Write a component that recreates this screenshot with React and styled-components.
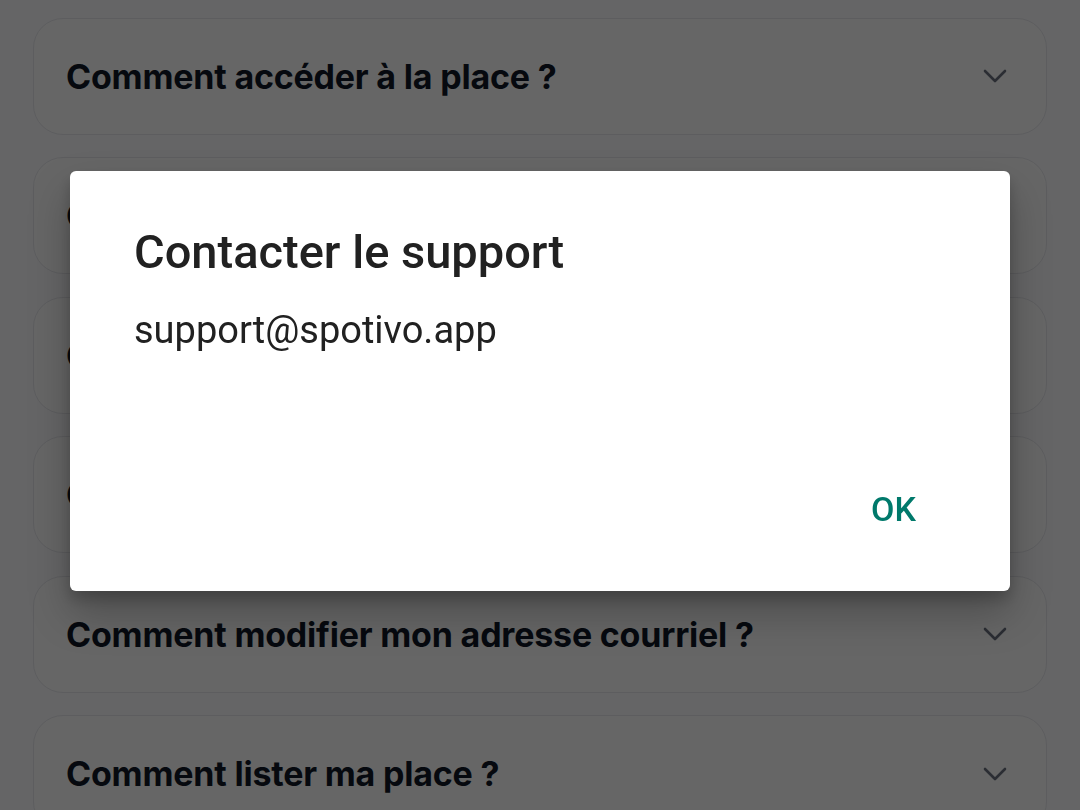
import React from 'react';
import styled, { createGlobalStyle } from 'styled-components';

const GlobalStyle = createGlobalStyle`
  html, body {
    margin: 0;
    padding: 0;
    background: #fdfdff;
  }
  body {
    font-family: Inter, "Noto Sans", sans-serif;
    overflow: hidden;
  }
`;

const questions = [
  'Comment accéder à la place ?',
  'Comment réserver une place ?',
  'Comment annuler ma réservation ?',
  'Comment payer ma réservation ?',
  'Comment modifier mon adresse courriel ?',
  'Comment lister ma place ?',
];

function Chevron() {
  return (
    <svg width="26" height="16" viewBox="0 0 26 16" fill="none">
      <path d="M3 3l10 10 10-10" stroke="#6b7280" strokeWidth="2.6" strokeLinecap="round" strokeLinejoin="round" />
    </svg>
  );
}

export default function App() {
  return (
    <>
      <GlobalStyle />
      <FaqList>
        {questions.map((q) => (
          <FaqCard key={q}>
            <Question>{q}</Question>
            <Chevron />
          </FaqCard>
        ))}
      </FaqList>

      {/* modal support */}
      <Backdrop />
      <Dialog role="dialog">
        <DialogTitle>Contacter le support</DialogTitle>
        <DialogBody>support@spotivo.app</DialogBody>
        <DialogActions>
          <TextButton>OK</TextButton>
        </DialogActions>
      </Dialog>
    </>
  );
}

const FaqList = styled.div`
  display: flex;
  flex-direction: column;
  gap: 22.5px;
  padding: 17.5px 33px;
`;

const FaqCard = styled.div`
  display: flex;
  align-items: center;
  justify-content: space-between;
  height: 117px;
  box-sizing: border-box;
  padding: 0 38px 0 32px;
  background: #fff;
  border: 1.5px solid #e8e9ee;
  border-radius: 30px;
`;

const Question = styled.span`
  font-family: Inter, "Noto Sans", sans-serif;
  font-weight: 700;
  font-size: 34px;
  color: #111827;
  letter-spacing: -0.2px;
`;

const Backdrop = styled.div`
  position: fixed;
  inset: 0;
  background: rgba(0, 0, 0, 0.6);
`;

const Dialog = styled.div`
  position: fixed;
  left: 70px;
  top: 171px;
  width: 940px;
  height: 420px;
  box-sizing: border-box;
  display: flex;
  flex-direction: column;
  padding: 53px 64px 0;
  background: #fff;
  border-radius: 6px;
  box-shadow: 0 22px 40px rgba(0, 0, 0, 0.25), 0 8px 14px rgba(0, 0, 0, 0.18);
  font-family: Roboto, "Liberation Sans", sans-serif;
`;

const DialogTitle = styled.h2`
  margin: 0;
  font-weight: 500;
  font-size: 47px;
  line-height: 56px;
  color: #212121;
`;

const DialogBody = styled.p`
  margin: 26px 0 0;
  font-size: 38px;
  line-height: 48px;
  color: #212121;
`;

const DialogActions = styled.div`
  display: flex;
  justify-content: flex-end;
  margin-top: auto;
  padding-bottom: 52px;
  margin-right: 14px;
`;

const TextButton = styled.button`
  border: none;
  background: none;
  padding: 10px 16px;
  font-family: Roboto, "Liberation Sans", sans-serif;
  font-weight: 500;
  font-size: 34px;
  color: #00796b;
  cursor: pointer;
`;
